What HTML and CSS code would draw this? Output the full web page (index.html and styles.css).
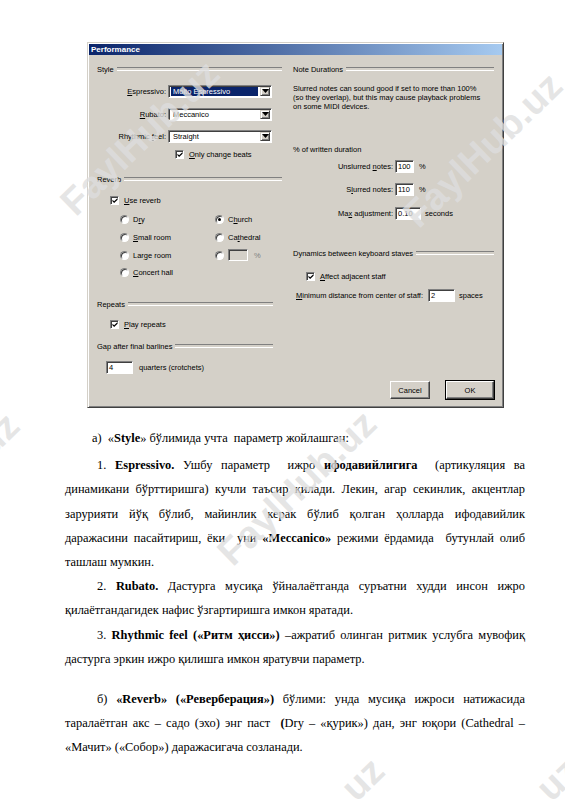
FILE: index.html
```html
<!DOCTYPE html>
<html>
<head>
<meta charset="utf-8">
<link rel="stylesheet" href="styles.css">
</head>
<body>
<div class="page">
  <div class="dialog">
    <div class="titlebar">Performance</div>
    <div class="dbody">
      <div class="col col-left">
        <div class="group" style="margin-top:7px"><span>Style</span></div>
        <div class="frow mt8">
          <span class="flabel"><u>E</u>spressivo:</span>
          <span class="select"><span class="sel-text hl">Molto Espressivo</span><span class="sel-btn"><svg width="7" height="4" viewBox="0 0 7 4"><path d="M0 0h7L3.5 4z"/></svg></span></span>
        </div>
        <div class="frow mt9">
          <span class="flabel"><u>R</u>ubato:</span>
          <span class="select"><span class="sel-text">Meccanico</span><span class="sel-btn"><svg width="7" height="4" viewBox="0 0 7 4"><path d="M0 0h7L3.5 4z"/></svg></span></span>
        </div>
        <div class="frow mt8">
          <span class="flabel">Rhythmic <u>f</u>eel:</span>
          <span class="select"><span class="sel-text">Straight</span><span class="sel-btn"><svg width="7" height="4" viewBox="0 0 7 4"><path d="M0 0h7L3.5 4z"/></svg></span></span>
        </div>
        <div class="frow mt4 ind-beats">
          <span class="check"><svg width="7" height="7" viewBox="0 0 7 7"><path d="M0.5 2.5l2 2l4-4v2l-4 4l-2-2z"/></svg></span><span class="ctext"><u>O</u>nly change beats</span>
        </div>

        <div class="group mt11"><span>Reverb</span></div>
        <div class="frow mt7 ind-check">
          <span class="check"><svg width="7" height="7" viewBox="0 0 7 7"><path d="M0.5 2.5l2 2l4-4v2l-4 4l-2-2z"/></svg></span><span class="ctext"><u>U</u>se reverb</span>
        </div>
        <div class="radios mt5">
          <div class="frow"><span class="radio"></span><span class="rtext">D<u>r</u>y</span></div>
          <div class="frow"><span class="radio on"></span><span class="rtext">C<u>h</u>urch</span></div>
        </div>
        <div class="radios mt4">
          <div class="frow"><span class="radio"></span><span class="rtext"><u>S</u>mall room</span></div>
          <div class="frow"><span class="radio"></span><span class="rtext">Ca<u>t</u>hedral</span></div>
        </div>
        <div class="radios mt4">
          <div class="frow"><span class="radio"></span><span class="rtext">Lar<u>g</u>e room</span></div>
          <div class="frow"><span class="radio"></span><span class="field disabled w20"></span><span class="unit grey">%</span></div>
        </div>
        <div class="radios mt3">
          <div class="frow"><span class="radio"></span><span class="rtext"><u>C</u>oncert hall</span></div>
        </div>

        <div class="group short mt18"><span>Repeats</span></div>
        <div class="frow mt6 ind-check">
          <span class="check"><svg width="7" height="7" viewBox="0 0 7 7"><path d="M0.5 2.5l2 2l4-4v2l-4 4l-2-2z"/></svg></span><span class="ctext"><u>P</u>lay repeats</span>
        </div>
        <div class="group short mt8"><span>Gap after final barlines</span></div>
        <div class="frow mt7 ind-gap">
          <span class="field w27">4</span><span class="unit u6">quarters (crotchets)</span>
        </div>
      </div>

      <div class="col col-right">
        <div class="group" style="margin-top:7px"><span>Note Durations</span></div>
        <p class="note">Slurred notes can sound good if set to more than 100%<br>(so they overlap), but this may cause playback problems<br>on some MIDI devices.</p>
        <div class="frow" style="margin-top:31px">% of written duration</div>
        <div class="frow mt3">
          <span class="rlabel">Unslurred <u>n</u>otes:</span><span class="field w19">100</span><span class="unit u5">%</span>
        </div>
        <div class="frow mt9">
          <span class="rlabel">S<u>l</u>urred notes:</span><span class="field w19">110</span><span class="unit u5">%</span>
        </div>
        <div class="frow mt10">
          <span class="rlabel">Ma<u>x</u> adjustment:</span><span class="field w26">0.10</span><span class="unit u4">seconds</span>
        </div>
        <div class="group" style="margin-top:26px"><span>Dynamics between keyboard staves</span></div>
        <div class="frow mt9 ind-check">
          <span class="check"><svg width="7" height="7" viewBox="0 0 7 7"><path d="M0.5 2.5l2 2l4-4v2l-4 4l-2-2z"/></svg></span><span class="ctext"><u>A</u>ffect adjacent staff</span>
        </div>
        <div class="frow mt5 ind-min">
          <span class="mlabel"><u>M</u>inimum distance from center of staff:</span><span class="field w27">2</span><span class="unit u4">spaces</span>
        </div>
      </div>
    </div>
    <div class="footer">
      <button class="btn btn-cancel">Cancel</button>
      <button class="btn btn-ok">OK</button>
    </div>
  </div>

  <div class="doc">
    <p class="para p0"><span class="ln last">а)&nbsp; «<b>Style</b>» бўлимида учта&nbsp; параметр жойлашган:</span></p>
    <p class="para p1">
      <span class="ln first">1. <b>Espressivo.</b> Ушбу параметр&nbsp; ижро <b>ифодавийлигига</b>&nbsp; (артикуляция ва</span>
      <span class="ln">динамикани бўрттиришга) кучли таъсир қилади. Лекин, агар секинлик, акцентлар</span>
      <span class="ln">зарурияти йўқ бўлиб, майинлик керак бўлиб қолган ҳолларда ифодавийлик</span>
      <span class="ln">даражасини пасайтириш, ёки&nbsp; уни <b>«Meccanico»</b> режими ёрдамида&nbsp; бутунлай олиб</span>
      <span class="ln last">ташлаш мумкин.</span>
    </p>
    <p class="para">
      <span class="ln first">2. <b>Rubato.</b> Дастурга мусиқа ўйналаётганда суръатни худди инсон ижро</span>
      <span class="ln last">қилаётгандагидек нафис ўзгартиришга имкон яратади.</span>
    </p>
    <p class="para">
      <span class="ln first">3. <b>Rhythmic feel («Ритм ҳисси»)</b> –ажратиб олинган ритмик услубга мувофиқ</span>
      <span class="ln last">дастурга эркин ижро қилишга имкон яратувчи параметр.</span>
    </p>
    <p class="para p4">
      <span class="ln first">б) <b>«Reverb» («Реверберация»)</b> бўлими: унда мусиқа ижроси натижасида</span>
      <span class="ln">таралаётган акс – садо (эхо) энг паст&nbsp; <b>(</b>Dry – «қурик») дан, энг юқори (Cathedral –</span>
      <span class="ln last">«Мачит» («Собор») даражасигача созланади.</span>
    </p>
  </div>

  <span class="wm" style="left:140px;top:138px">FaylHub.uz</span>
  <span class="wm" style="left:483px;top:150px">FaylHub.uz</span>
  <span class="wm" style="left:297px;top:488px">FaylHub.uz</span>
  <span class="wm" style="left:-60px;top:490px">FaylHub.uz</span>
  <span class="wm" style="left:305px;top:835px">FaylHub.uz</span>
  <span class="wm" style="left:500px;top:835px">FaylHub.uz</span>
</div>
</body>
</html>
```

FILE: styles.css
```css
* { box-sizing: border-box; }
body { margin: 0; background: #fff; }
.page {
  position: relative;
  width: 565px;
  height: 800px;
  overflow: hidden;
  padding-top: 42px;
}

/* ---------- dialog ---------- */
.dialog {
  margin-left: 87px;
  width: 417px;
  height: 366px;
  background: #d4d0c8;
  display: flex;
  flex-direction: column;
  border: 1px solid;
  border-color: #d4d0c8 #404040 #404040 #d4d0c8;
  box-shadow: inset 1px 1px #fff, inset -1px -1px #808080;
  padding: 1px;
  font-family: "Liberation Sans", Arial, sans-serif;
  font-size: 7.5px;
  color: #000;
}
.titlebar {
  height: 11px;
  line-height: 11px;
  padding-left: 2px;
  background: linear-gradient(to right, #0a246a, #a6caf0);
  color: #fff;
  font-weight: bold;
  font-size: 8px;
}
.dbody {
  flex: 1;
  display: flex;
  padding-left: 8px;
}
.col { display: flex; flex-direction: column; }
.col-left { width: 185px; }
.col-right { width: 201px; margin-left: 11px; }

.mt3 { margin-top: 3px; }
.mt4 { margin-top: 4px; }
.mt5 { margin-top: 5px; }
.mt6 { margin-top: 6px; }
.mt7 { margin-top: 7px; }
.mt8 { margin-top: 8px; }
.mt9 { margin-top: 9px; }
.mt10 { margin-top: 10px; }
.mt11 { margin-top: 11px; }
.mt18 { margin-top: 18px; }

.group {
  height: 14px;
  display: flex;
  align-items: center;
}
.group::after {
  content: "";
  flex: 1;
  height: 2px;
  margin-left: 3px;
  border-top: 1px solid #808080;
  border-bottom: 1px solid #fff;
}
.group.short { margin-right: 9px; }

.frow {
  height: 14px;
  display: flex;
  align-items: center;
  white-space: nowrap;
}
.flabel { width: 69px; margin-right: 2px; text-align: right; }

.select {
  width: 104px;
  height: 13px;
  background: #fff;
  display: flex;
  padding: 1px;
  border: 1px solid;
  border-color: #808080 #fff #fff #808080;
  box-shadow: inset 1px 1px #404040;
}
.sel-text {
  flex: 1;
  padding-left: 2px;
  line-height: 9px;
  margin: 0 2px 0 1px;
}
.sel-text.hl { background: #0a246a; color: #fff; }
.sel-btn {
  width: 10px;
  background: #d4d0c8;
  display: flex;
  align-items: center;
  justify-content: center;
  border: 1px solid;
  border-color: #d4d0c8 #404040 #404040 #d4d0c8;
  box-shadow: inset 1px 1px #fff, inset -1px -1px #808080;
}
.sel-btn svg { fill: #000; }

.check {
  width: 9px;
  height: 9px;
  background: #fff;
  border: 1px solid;
  border-color: #808080 #fff #fff #808080;
  box-shadow: inset 1px 1px #404040;
  display: flex;
  align-items: center;
  justify-content: center;
  padding-left: 1px;
  padding-top: 1px;
}
.check svg { fill: #000; }
.ctext { margin-left: 5px; }
.ind-beats { padding-left: 78px; }
.ind-check { padding-left: 13px; }
.ind-gap { padding-left: 9px; }
.ind-min { padding-left: 3px; }

.radios {
  display: grid;
  grid-template-columns: 95px 1fr;
  padding-left: 23px;
  height: 14px;
}
.radio {
  width: 9px;
  height: 9px;
  border-radius: 50%;
  background: #fff;
  border: 1px solid;
  border-color: #808080 #fff #fff #808080;
  box-shadow: inset 1px 1px #404040, 0 0 0 0.5px #d4d0c8;
  position: relative;
}
.radio.on::after {
  content: "";
  position: absolute;
  left: 2px;
  top: 2px;
  width: 3px;
  height: 3px;
  border-radius: 50%;
  background: #000;
}
.rtext { margin-left: 4px; }

.field {
  height: 13px;
  line-height: 11px;
  padding-left: 2px;
  background: #fff;
  border: 1px solid;
  border-color: #808080 #fff #fff #808080;
  box-shadow: inset 1px 1px #404040;
}
.field.disabled { background: #d4d0c8; margin-left: 4px; height: 12px; }
.w19 { width: 19px; }
.w20 { width: 20px; }
.w26 { width: 26px; }
.w27 { width: 27px; }
.unit.grey { color: #808080; margin-left: 6px; }
.u4 { margin-left: 4px; }
.u5 { margin-left: 5px; }
.u6 { margin-left: 6px; }

.note {
  margin: 8px 0 0;
  line-height: 9px;
  white-space: nowrap;
}
.rlabel { width: 100px; margin-right: 2px; text-align: right; }
.mlabel { width: 132px; }

.footer {
  display: flex;
  justify-content: flex-end;
  align-items: center;
  gap: 16px;
  padding: 0 8px 7px 0;
}
.btn {
  font-family: "Liberation Sans", Arial, sans-serif;
  font-size: 7.5px;
  color: #000;
  background: #d4d0c8;
  height: 18px;
  padding: 0;
  border: 1px solid;
  border-color: #fff #404040 #404040 #fff;
  box-shadow: inset -1px -1px #808080;
}
.btn-cancel { width: 40px; }
.btn-ok {
  width: 48px;
  outline: 1px solid #000;
  outline-offset: 0;
}

/* ---------- document text ---------- */
.doc {
  margin: 18px 0 0 65px;
  width: 460px;
  font-family: "Liberation Serif", "Times New Roman", serif;
  font-size: 12.4px;
  line-height: 24.2px;
  color: #000;
}
.para { margin: 0; }
.p1 { margin-top: 3px; }
.p4 { margin-top: 16px; }
.ln {
  display: block;
  white-space: nowrap;
  text-align: justify;
  text-align-last: justify;
}
.ln.last { text-align-last: left; }
.ln.first { padding-left: 32px; }
.p0 .ln { padding-left: 27px; }

/* ---------- watermark ---------- */
.wm {
  position: absolute;
  transform: translate(-50%, -50%) rotate(-44deg);
  font-family: "Liberation Sans", Arial, sans-serif;
  font-weight: bold;
  font-size: 38px;
  color: rgba(222, 222, 222, 0.8);
  white-space: nowrap;
  pointer-events: none;
}
```
